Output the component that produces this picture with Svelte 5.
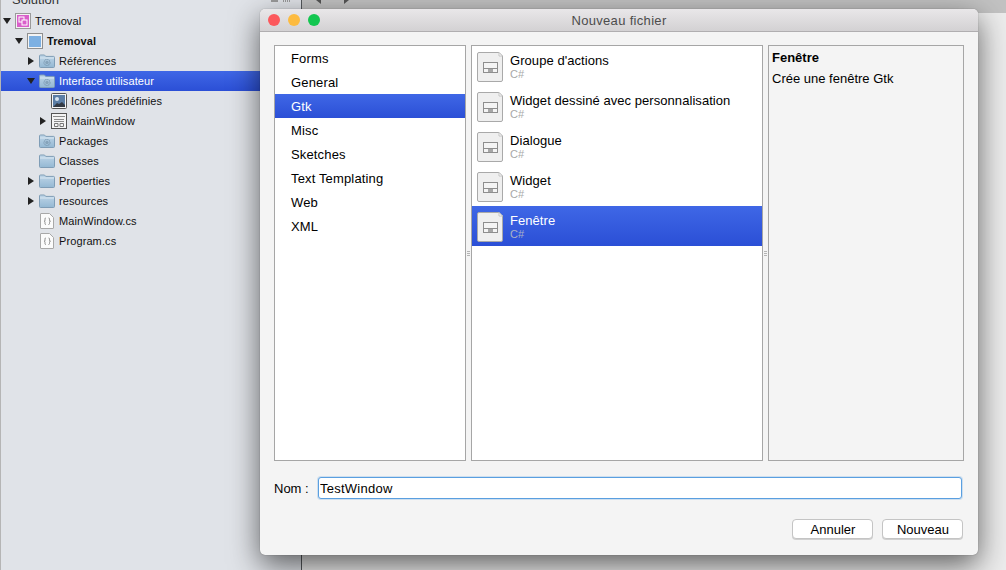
<script>
  const tree = [
    { level: 0, arrow: 'down', icon: 'solution', label: 'Tremoval' },
    { level: 1, arrow: 'down', icon: 'project', label: 'Tremoval', bold: true },
    { level: 2, arrow: 'right', icon: 'gear', label: 'Références' },
    { level: 2, arrow: 'down', icon: 'gear', label: 'Interface utilisateur', selected: true },
    { level: 3, icon: 'image', label: 'Icônes prédéfinies' },
    { level: 3, arrow: 'right', icon: 'form', label: 'MainWindow' },
    { level: 2, icon: 'gear', label: 'Packages' },
    { level: 2, icon: 'folder', label: 'Classes' },
    { level: 2, arrow: 'right', icon: 'folder', label: 'Properties' },
    { level: 2, arrow: 'right', icon: 'folder', label: 'resources' },
    { level: 2, icon: 'code', label: 'MainWindow.cs' },
    { level: 2, icon: 'code', label: 'Program.cs' }
  ];
  const categories = ['Forms', 'General', 'Gtk', 'Misc', 'Sketches', 'Text Templating', 'Web', 'XML'];
  const templates = ["Groupe d'actions", 'Widget dessiné avec personnalisation', 'Dialogue', 'Widget', 'Fenêtre'];
</script>

{#snippet folderShape(gear)}
  <svg width="16" height="14" viewBox="0 0 16 14">
    <defs>
      <linearGradient id={gear ? 'fg' : 'fp'} x1="0" y1="0" x2="0" y2="1">
        <stop offset="0" stop-color="#bfd6e8" />
        <stop offset="1" stop-color="#94b8d3" />
      </linearGradient>
    </defs>
    <path d="M.5 12.500V2a1 1 0 0 1 1-1h4l1.200 1.400h7.800a1 1 0 0 1 1 1v9.100a1 1 0 0 1-1 1h-13a1 1 0 0 1-1-1z" fill="url(#{gear ? 'fg' : 'fp'})" stroke="#7f9db6" />
    <path d="M1 4h14" stroke="#dbe8f2" />
    {#if gear}
      <circle cx="8" cy="8.500" r="3" fill="none" stroke="#7a98b0" stroke-width="1.100" stroke-dasharray="1.300 .7" />
      <circle cx="8" cy="8.500" r="1.700" fill="#86a3ba" />
    {/if}
  </svg>
{/snippet}

{#snippet treeIcon(kind)}
  {#if kind === 'solution'}
    <svg width="16" height="16" viewBox="0 0 16 16">
      <rect x=".5" y=".5" width="15" height="15" fill="#f4f2f4" stroke="#9a9a9a" />
      <rect x="2" y="2" width="12" height="12" fill="#d95fca" />
      <rect x="4" y="4" width="5" height="5" fill="#d95fca" stroke="#fff" />
      <rect x="7" y="7" width="5" height="5" fill="#d95fca" stroke="#fff" />
    </svg>
  {:else if kind === 'project'}
    <svg width="16" height="16" viewBox="0 0 16 16">
      <rect x=".5" y=".5" width="15" height="15" fill="#f3f3f3" stroke="#8f8f8f" />
      <rect x="2" y="3" width="12" height="11" fill="#7db0e2" />
    </svg>
  {:else if kind === 'gear'}
    {@render folderShape(true)}
  {:else if kind === 'folder'}
    {@render folderShape(false)}
  {:else if kind === 'image'}
    <svg width="16" height="16" viewBox="0 0 16 16">
      <rect x=".5" y=".5" width="15" height="15" rx="1" fill="#f4f4f4" stroke="#555" />
      <rect x="2" y="2" width="12" height="12" fill="#5b7ea6" />
      <circle cx="6" cy="6" r="2" fill="#d9e6f2" />
      <path d="M2 14l4-4 2 1 3-2 3 3v2z" fill="#333a44" />
    </svg>
  {:else if kind === 'form'}
    <svg width="16" height="16" viewBox="0 0 16 16">
      <rect x=".5" y=".5" width="15" height="15" fill="#f4f4f4" stroke="#555" />
      <path d="M2 3h12v1H2zM3 6h10v1H3zM3 8h10v1H3z" fill="#8a8a8a" />
      <path d="M3.500 10.500h3.500v3H3.500zM9 10.500h3.500v3H9z" fill="none" stroke="#777" />
    </svg>
  {:else}
    <svg width="16" height="16" viewBox="0 0 16 16">
      <path d="M1.500 1a.5.5 0 0 1 .5-.5h8.500l4 4V15a.5.5 0 0 1-.5.5H2a.5.5 0 0 1-.5-.5z" fill="#fbfbfb" stroke="#a8a8a8" />
      <path d="M7 5c-1.300 0-1 .8-1 2s-.3 1-1 1.200c.7.200 1 .2 1 1.300s-.3 2 1 2M9.500 5c1.300 0 1 .8 1 2s.3 1 1 1.200c-.7.200-1 .2-1 1.300s.3 2-1 2" fill="none" stroke="#777" stroke-width=".8" />
    </svg>
  {/if}
{/snippet}

{#snippet docIcon()}
  <svg class="doc" width="28" height="31" viewBox="0 0 28 31">
    <path d="M1.500 3a1.500 1.500 0 0 1 1.500-1.500H23l3.500 3.500v24a1.500 1.500 0 0 1-1.500 1.500H3A1.500 1.500 0 0 1 1.500 29z" fill="#efefef" stroke="#a9a9a9" />
    <path d="M23 1.500v3.500h3.500z" fill="#fff" stroke="#c4c4c4" />
    <rect x="7.500" y="11.500" width="14" height="10" fill="#f4f4f4" stroke="#8e8e8e" />
    <path d="M8 17.500h13" stroke="#8e8e8e" />
    <rect x="12" y="18" width="5" height="3" fill="#a6a6a6" />
  </svg>
{/snippet}

{#snippet grip()}
  <div class="grip"><i></i><i></i><i></i></div>
{/snippet}

<div class="desktop">
  <aside class="sidebar">
    <div class="side-head">
      <span class="side-title">Solution</span>
      <span class="side-tools"><i class="bars"></i><i class="dots"></i></span>
    </div>
    {#each tree as row}
      <div class="row" class:selected={row.selected} class:bold={row.bold} style="padding-left: {2 + row.level * 12}px">
        <span class="twisty">
          {#if row.arrow}<span class={row.arrow}></span>{/if}
        </span>
        <span class="ticon">{@render treeIcon(row.icon)}</span>
        <span class="tlabel">{row.label}</span>
      </div>
    {/each}
  </aside>
  <main class="editor">
    <div class="toolbar">
      <span class="nav left"></span>
      <span class="nav right"></span>
    </div>
  </main>

  <section class="dialog">
    <header class="titlebar">
      <div class="lights">
        <span class="red"></span><span class="yellow"></span><span class="green"></span>
      </div>
      <span class="title">Nouveau fichier</span>
    </header>
    <div class="body">
      <div class="panes">
        <ul class="pane cats">
          {#each categories as c}
            <li class:active={c === 'Gtk'}>{c}</li>
          {/each}
        </ul>
        {@render grip()}
        <ul class="pane temps">
          {#each templates as t}
            <li class:active={t === 'Fenêtre'}>
              {@render docIcon()}
              <div class="ttext">
                <span class="tname">{t}</span>
                <span class="tsub">C#</span>
              </div>
            </li>
          {/each}
        </ul>
        {@render grip()}
        <div class="pane info">
          <strong>Fenêtre</strong>
          <p>Crée une fenêtre Gtk</p>
        </div>
      </div>
      <div class="name-row">
        <label for="nm">Nom :</label>
        <input id="nm" value="TestWindow" />
      </div>
      <div class="buttons">
        <button>Annuler</button>
        <button>Nouveau</button>
      </div>
    </div>
  </section>
</div>

<style>
  :global(body) { margin: 0; overflow: hidden; }
  .desktop {
    position: relative;
    display: flex;
    width: 1006px;
    height: 570px;
    overflow: hidden;
    font-family: "Liberation Sans", Arial, sans-serif;
    color: #000;
    background: #fff;
  }
  .sidebar {
    width: 300px;
    flex: none;
    background: #e0e3e8;
    border-left: 1px solid #b5b5b5;
    border-right: 1px solid #55585c;
    box-sizing: content-box;
    font-size: 11px;
    letter-spacing: .1px;
  }
  .side-head {
    height: 11px;
    overflow: hidden;
    font-size: 13px;
    line-height: 20px;
    display: flex;
    justify-content: space-between;
    color: #333;
    padding: 0 11px;
    letter-spacing: 0;
  }
  .side-title { margin-top: -10px; }
  .side-tools { display: flex; gap: 5px; height: 2px; }
  .bars { width: 7px; height: 2px; background: #9a9a9a; }
  .dots { width: 7px; height: 2px; background: repeating-linear-gradient(90deg, #9a9a9a 0 1px, transparent 1px 2px); }
  .row {
    height: 20px;
    display: flex;
    align-items: center;
    color: #111;
    white-space: nowrap;
  }
  .row.bold .tlabel { font-weight: 700; }
  .row.selected {
    background: linear-gradient(#3f67e6, #2b4fd6);
    color: #fff;
  }
  .twisty { width: 8px; margin-right: 4px; display: flex; justify-content: center; flex: none; }
  .down { width: 0; height: 0; border-left: 4px solid transparent; border-right: 4px solid transparent; border-top: 6px solid #222; }
  .right { width: 0; height: 0; border-top: 4px solid transparent; border-bottom: 4px solid transparent; border-left: 6px solid #222; }
  .ticon { width: 16px; height: 16px; display: flex; align-items: center; justify-content: flex-start; margin-right: 4px; flex: none; }
  .editor { flex: 1; background: #ececec; }
  .toolbar {
    height: 13px;
    background: #c2c2c2;
    display: flex;
    gap: 23px;
    padding-left: 14px;
  }
  .nav { width: 0; height: 0; border-top: 4px solid transparent; border-bottom: 4px solid transparent; margin-top: -4px; }
  .nav.left { border-right: 5px solid #555; }
  .nav.right { border-left: 5px solid #555; }

  .dialog {
    position: absolute;
    left: 260px;
    top: 9px;
    width: 718px;
    height: 546px;
    border-radius: 5px;
    background: #f4f4f4;
    box-shadow: 0 10px 30px rgba(0, 0, 0, .6), 0 0 1px rgba(0, 0, 0, .5);
    display: flex;
    flex-direction: column;
    overflow: hidden;
    font-size: 13px;
  }
  .titlebar {
    height: 22px;
    flex: none;
    background: linear-gradient(#e9e7e9, #d3d1d3);
    border-bottom: 1px solid #b0aeb0;
    display: flex;
    align-items: center;
    justify-content: center;
    position: relative;
  }
  .title { color: #4c4c4c; letter-spacing: .32px; }
  .lights { position: absolute; left: 8px; top: 5px; display: flex; gap: 8px; }
  .lights span { width: 12px; height: 12px; border-radius: 50%; }
  .red { background: #fc585c; }
  .yellow { background: #fdbb40; }
  .green { background: #13c650; }
  .body {
    flex: 1;
    display: flex;
    flex-direction: column;
    padding: 13px 14px 16px;
    min-height: 0;
  }
  .panes {
    display: grid;
    grid-template-columns: 192px 5px 292px 5px 196px;
    height: 416px;
    flex: none;
  }
  .pane {
    list-style: none;
    margin: 0;
    padding: 0;
    border: 1px solid #a6a6a6;
    background: #fff;
    min-width: 0;
    box-sizing: border-box;
  }
  .cats li {
    height: 24px;
    line-height: 26px;
    padding-left: 16px;
    letter-spacing: .15px;
  }
  .active { background: linear-gradient(#3f67e6, #2b4fd6); color: #fff; }
  .temps li {
    height: 40px;
    display: flex;
    align-items: center;
    padding-left: 4px;
    gap: 6px;
  }
  .ttext { display: flex; flex-direction: column; }
  .tname { line-height: 16px; position: relative; top: 1px; letter-spacing: .06px; }
  .tsub { font-size: 11px; line-height: 12px; color: #a8a8a8; }
  .temps .active .tsub { color: #aab2c6; }
  .doc { flex: none; }
  .grip {
    display: flex;
    flex-direction: column;
    justify-content: center;
    gap: 1px;
    padding: 0 1px;
  }
  .grip i { height: 1px; background: #b4b4b4; }
  .info {
    background: #f4f4f4;
    padding: 3px 3px;
  }
  .info strong { display: block; line-height: 18px; }
  .info p { margin: 3px 0 0; line-height: 18px; }
  .name-row {
    display: flex;
    align-items: center;
    margin-top: 16px;
    gap: 9px;
  }
  .name-row label { width: 35px; flex: none; white-space: nowrap; }
  .name-row input {
    flex: 1;
    height: 22px;
    box-sizing: border-box;
    border: 1px solid #5a9fe0;
    border-radius: 3px;
    box-shadow: 0 0 0 1px rgba(90, 159, 224, .25);
    padding: 0 1px;
    font: inherit;
    letter-spacing: .25px;
    color: #000;
    background: #fff;
    outline: none;
    margin-right: 2px;
    min-width: 0;
  }
  .buttons {
    display: flex;
    justify-content: flex-end;
    gap: 9px;
    margin-top: 20px;
    padding-right: 1px;
  }
  .buttons button {
    width: 81px;
    height: 20px;
    padding: 0 0 0 1px;
    font: inherit;
    color: #000;
    background: #fff;
    border: 1px solid #c4c4c4;
    border-radius: 4px;
    box-shadow: 0 1px 0 #d0d0d0;
  }
</style>
